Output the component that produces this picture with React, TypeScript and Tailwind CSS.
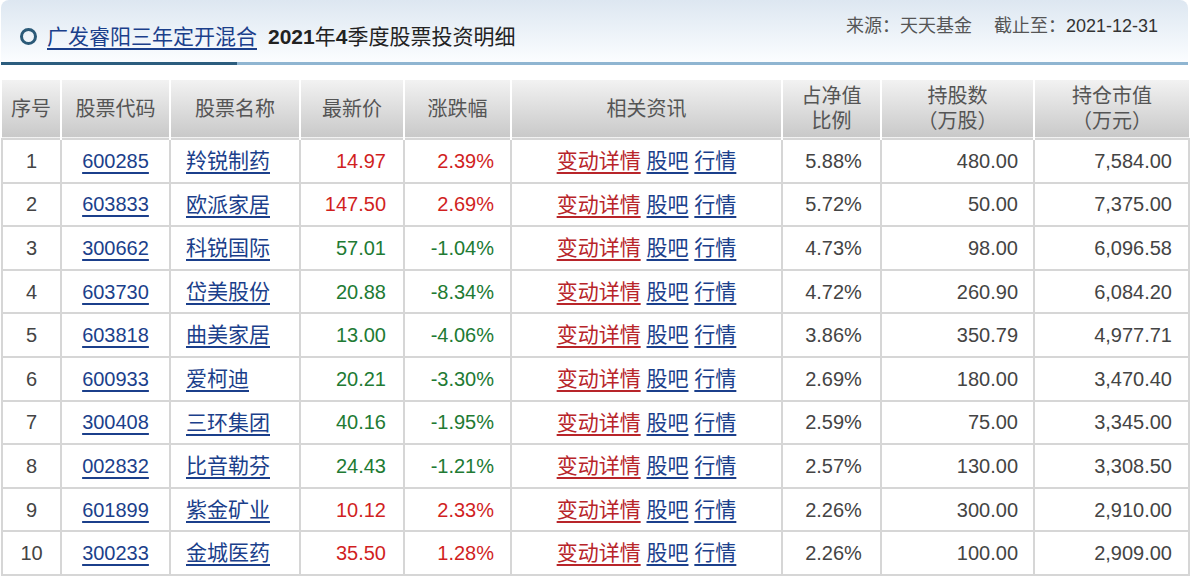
import React from "react";

type Row = {
  no: number;
  code: string;
  name: string;
  price: string;
  change: string;
  ratio: string;
  shares: string;
  value: string;
};

const ROWS: Row[] = [
  { no: 1, code: "600285", name: "羚锐制药", price: "14.97", change: "2.39%", ratio: "5.88%", shares: "480.00", value: "7,584.00" },
  { no: 2, code: "603833", name: "欧派家居", price: "147.50", change: "2.69%", ratio: "5.72%", shares: "50.00", value: "7,375.00" },
  { no: 3, code: "300662", name: "科锐国际", price: "57.01", change: "-1.04%", ratio: "4.73%", shares: "98.00", value: "6,096.58" },
  { no: 4, code: "603730", name: "岱美股份", price: "20.88", change: "-8.34%", ratio: "4.72%", shares: "260.90", value: "6,084.20" },
  { no: 5, code: "603818", name: "曲美家居", price: "13.00", change: "-4.06%", ratio: "3.86%", shares: "350.79", value: "4,977.71" },
  { no: 6, code: "600933", name: "爱柯迪", price: "20.21", change: "-3.30%", ratio: "2.69%", shares: "180.00", value: "3,470.40" },
  { no: 7, code: "300408", name: "三环集团", price: "40.16", change: "-1.95%", ratio: "2.59%", shares: "75.00", value: "3,345.00" },
  { no: 8, code: "002832", name: "比音勒芬", price: "24.43", change: "-1.21%", ratio: "2.57%", shares: "130.00", value: "3,308.50" },
  { no: 9, code: "601899", name: "紫金矿业", price: "10.12", change: "2.33%", ratio: "2.26%", shares: "300.00", value: "2,910.00" },
  { no: 10, code: "300233", name: "金城医药", price: "35.50", change: "1.28%", ratio: "2.26%", shares: "100.00", value: "2,909.00" },
];

const link =
  "underline decoration-2 underline-offset-[4px] text-[#1b3f8b] decoration-[#1b3f8b]";
const redLink =
  "underline decoration-2 underline-offset-[4px] text-[#b8252a] decoration-[#b8252a]";

const th =
  "border-l-2 border-l-white first:border-l-0 font-normal text-[#555] text-[20px] leading-[25px] text-center align-middle";
const td = "border-2 border-[#d6d6d6] align-middle";

export default function App() {
  return (
    <div
      className="w-[1191px] h-[580px] bg-white overflow-hidden"
      style={{ fontFamily: '"Liberation Sans", "Noto Sans CJK SC", sans-serif' }}
    >
      <div className="ml-[1px] w-[1187px]">
        {/* title band */}
        <div className="h-[62px] rounded-t-[8px] bg-gradient-to-b from-[#dde7f1] to-[#fbfdff] flex justify-between">
          <div className="flex items-center pl-[19px] pt-[10px]">
            <span className="w-[17px] h-[17px] rounded-full border-[3px] border-[#2b5a78]" />
            <a className={`${link} ml-[10px] text-[21px] leading-none`}>广发睿阳三年定开混合</a>
            <span className="ml-[11px] text-[21px] leading-none text-[#222]">
              <b>2021</b>年<b>4</b>季度股票投资明细
            </span>
          </div>
          <div className="pt-[15px] pr-[30px] text-[18px] leading-[22px] text-[#555]">
            来源：天天基金<span className="inline-block w-[22px]" />截止至：<span className="text-[#333]">2021-12-31</span>
          </div>
        </div>
        <div className="flex h-[3px]">
          <div className="w-[236px] bg-[#2c5d7e]" />
          <div className="flex-1 bg-[#8fb5d1]" />
        </div>

        {/* table */}
        <table className="mt-[15px] w-[1187px] table-fixed border-collapse">
          <colgroup>
            <col className="w-[59px]" />
            <col className="w-[109px]" />
            <col className="w-[130px]" />
            <col className="w-[104px]" />
            <col className="w-[107px]" />
            <col className="w-[271px]" />
            <col className="w-[99px]" />
            <col className="w-[153px]" />
            <col className="w-[155px]" />
          </colgroup>
          <thead>
            <tr className="h-[59px] bg-gradient-to-b from-[#f2f2f2] to-[#c9c9c9] border-b-2 border-b-[#9c9c9c]">
              <th className={th}>序号</th>
              <th className={th}>股票代码</th>
              <th className={th}>股票名称</th>
              <th className={th}>最新价</th>
              <th className={th}>涨跌幅</th>
              <th className={th}>相关资讯</th>
              <th className={th}>
                占净值
                <br />
                比例
              </th>
              <th className={th}>
                持股数
                <br />
                （万股）
              </th>
              <th className={th}>
                持仓市值
                <br />
                （万元）
              </th>
            </tr>
          </thead>
          <tbody className="text-[20px] text-[#444]">
            {ROWS.map((r) => {
              const up = !r.change.startsWith("-");
              const color = up ? "text-[#d11f1f]" : "text-[#217a33]";
              return (
                <tr key={r.no} className="h-[43.6px]">
                  <td className={`${td} text-center`}>{r.no}</td>
                  <td className={`${td} text-center`}>
                    <a className={link}>{r.code}</a>
                  </td>
                  <td className={`${td} pl-[15px] text-[21px]`}>
                    <a className={link}>{r.name}</a>
                  </td>
                  <td className={`${td} text-right pr-[17px] ${color}`}>{r.price}</td>
                  <td className={`${td} text-right pr-[16px] ${color}`}>{r.change}</td>
                  <td className={`${td} text-center text-[21px]`}>
                    <a className={redLink}>变动详情</a>{" "}
                    <a className={link}>股吧</a>{" "}
                    <a className={link}>行情</a>
                  </td>
                  <td className={`${td} text-center pl-[4px]`}>{r.ratio}</td>
                  <td className={`${td} text-right pr-[15px]`}>{r.shares}</td>
                  <td className={`${td} text-right pr-[16px]`}>{r.value}</td>
                </tr>
              );
            })}
          </tbody>
        </table>
      </div>
    </div>
  );
}
